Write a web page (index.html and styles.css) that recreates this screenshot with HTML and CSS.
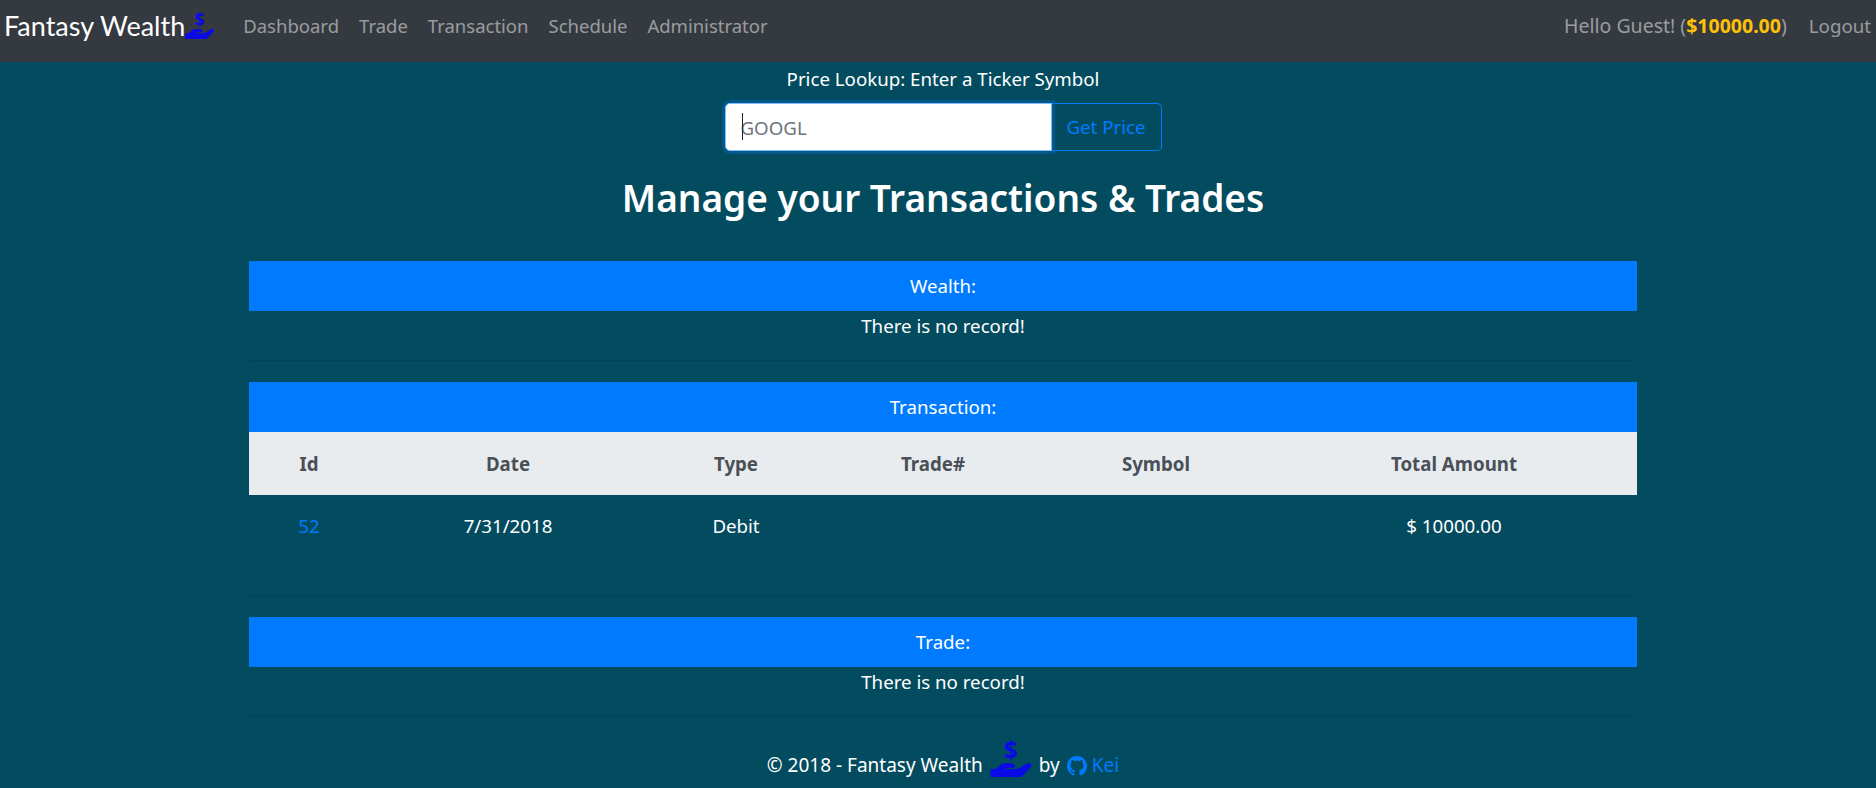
FILE: index.html
```html
<!DOCTYPE html>
<html>
<head>
    <title>Fantasy Wealth</title>
    <link rel="stylesheet" href="styles.css">
</head>
<body>
    <nav class="topbar">
        <a class="brand" href="#">Fantasy Wealth<span class="money-hand money-hand-small"><span class="money-sign">$</span><svg viewBox="0 0 41 15"><path d="M0 7h5l6-5c2-1 5-1 7-1l5 1c2 1 2 4-1 4h-6v1h11l9-5c2-2 5-1 5 2l-8 9c-2 2-4 3-6 3H0z"/></svg></span></a>
        <ul class="nav-links">
            <li><a href="#">Dashboard</a></li>
            <li><a href="#">Trade</a></li>
            <li><a href="#">Transaction</a></li>
            <li><a href="#">Schedule</a></li>
            <li><a href="#">Administrator</a></li>
        </ul>
        <div class="nav-user">
            <span>Hello Guest! (<b class="balance">$10000.00</b>)</span>
            <a href="#">Logout</a>
        </div>
    </nav>

    <main class="page-container">
        <div class="lookup">
            <label for="ticker">Price Lookup: Enter a Ticker Symbol</label>
            <div class="lookup-group">
                <div class="ticker-wrap">
                    <input type="text" id="ticker" placeholder="GOOGL">
                    <span class="caret"></span>
                </div>
                <button>Get Price</button>
            </div>
        </div>

        <h1>Manage your Transactions &amp; Trades</h1>

        <section class="panel">
            <h2>Wealth:</h2>
            <p>There is no record!</p>
        </section>

        <section class="panel panel-table">
            <h2>Transaction:</h2>
            <table>
                <colgroup>
                    <col class="col-id">
                    <col class="col-date">
                    <col class="col-type">
                    <col class="col-trade">
                    <col class="col-symbol">
                    <col>
                </colgroup>
                <thead>
                    <tr>
                        <th>Id</th>
                        <th>Date</th>
                        <th>Type</th>
                        <th>Trade#</th>
                        <th>Symbol</th>
                        <th>Total Amount</th>
                    </tr>
                </thead>
                <tbody>
                    <tr>
                        <td><a href="#">52</a></td>
                        <td>7/31/2018</td>
                        <td>Debit</td>
                        <td></td>
                        <td></td>
                        <td>$ 10000.00</td>
                    </tr>
                </tbody>
            </table>
        </section>

        <section class="panel">
            <h2>Trade:</h2>
            <p>There is no record!</p>
        </section>

        <footer>
            <span>© 2018 - Fantasy Wealth</span>
            <span class="money-hand"><span class="money-sign">$</span><svg viewBox="0 0 41 15"><path d="M0 7h5l6-5c2-1 5-1 7-1l5 1c2 1 2 4-1 4h-6v1h11l9-5c2-2 5-1 5 2l-8 9c-2 2-4 3-6 3H0z"/></svg></span>
            <span>by</span>
            <a href="#" class="author">
                <svg class="github-icon" viewBox="0 0 16 16"><path d="M8 0C3.580 0 0 3.580 0 8c0 3.540 2.290 6.530 5.470 7.590.4.070.55-.17.55-.38 0-.19-.01-.82-.01-1.490-2.010.37-2.530-.49-2.690-.94-.09-.23-.48-.94-.82-1.130-.28-.15-.68-.52-.01-.53.63-.01 1.080.58 1.230.82.72 1.210 1.870.87 2.330.66.07-.52.28-.87.51-1.070-1.780-.2-3.640-.89-3.640-3.950 0-.87.31-1.590.82-2.150-.08-.2-.36-1.020.08-2.120 0 0 .67-.21 2.200.82.64-.18 1.320-.27 2-.27.68 0 1.360.09 2 .27 1.530-1.040 2.200-.82 2.200-.82.44 1.100.16 1.920.08 2.120.51.56.82 1.270.82 2.150 0 3.070-1.870 3.750-3.650 3.950.29.25.54.73.54 1.480 0 1.070-.01 1.930-.01 2.200 0 .21.15.46.55.38A8.013 8.013 0 0016 8c0-4.420-3.580-8-8-8z"/></svg>
                Kei
            </a>
        </footer>
    </main>
</body>
</html>
```

FILE: styles.css
```css
html, body {
    height: 788px;
    overflow: hidden;
}
body {
    margin: 0;
    background-color: #034c60;
    color: #fff;
    font-family: "Noto Sans", sans-serif;
    font-size: 18.7px;
    line-height: 1.5;
}
a { text-decoration: none; color: #007bff; }

/* Hand holding a dollar sign, used in the brand and the footer */
.money-hand {
    display: inline-flex;
    flex-direction: column;
    align-items: center;
    width: 42px;
    height: 40px;
    color: #0a0ae6;
    fill: #0a0ae6;
}
.money-hand svg { width: 100%; height: 15px; flex: none; margin-top: auto; }
.money-sign {
    font-size: 25px;
    font-weight: 700;
    line-height: 25px;
}
.money-hand-small { width: 29px; height: 28px; }
.money-hand-small svg { height: 11px; }
.money-hand-small .money-sign { font-size: 18px; line-height: 17px; }

/* Top bar */
.topbar {
    display: flex;
    align-items: center;
    height: 62px;
    padding: 0 5px 10px 4px;
    box-sizing: border-box;
    background-color: #343a40;
    font-size: 18.5px;
}
.brand {
    display: flex;
    align-items: center;
    color: #fff;
    font-family: "Lato", sans-serif;
    font-size: 27px;
    line-height: 32px;
    margin-right: 29px;
}
.brand .money-hand { margin-top: -2px; font-family: "Noto Sans", sans-serif; }
.nav-links {
    display: flex;
    gap: 20px;
    list-style: none;
    margin: 0;
    padding: 0;
}
.nav-links a, .nav-user a, .nav-user span { color: rgba(255, 255, 255, .5); }
.nav-user {
    display: flex;
    align-items: baseline;
    gap: 22px;
    margin-left: auto;
    font-size: 19.5px;
}
.nav-user a { font-size: 18.7px; }
.balance { color: #ffc107; }

/* Lookup */
.page-container {
    width: 1388px;
    margin-left: 249px;
}
.lookup {
    display: flex;
    flex-direction: column;
    align-items: center;
    padding-top: 3px;
}
.lookup-group {
    display: flex;
    width: 437px;
    height: 48px;
    margin-top: 10px;
}
.ticker-wrap {
    position: relative;
    flex: 1;
    z-index: 1;
}
.ticker-wrap input {
    width: 100%;
    height: 100%;
    box-sizing: border-box;
    padding: 0 15px;
    border: 1px solid #80bdff;
    border-radius: 5px 0 0 5px;
    box-shadow: 0 0 0 3px rgba(0, 123, 255, .25);
    font: inherit;
    outline: none;
}
.ticker-wrap input::placeholder { color: #6c757d; }
.caret {
    position: absolute;
    left: 17px;
    top: 10px;
    width: 1px;
    height: 27px;
    background-color: #222;
}
.lookup-group button {
    width: 110px;
    border: 1px solid #007bff;
    border-left: 0;
    border-radius: 0 5px 5px 0;
    background: transparent;
    color: #007bff;
    font: inherit;
}

h1 {
    margin: 25px 0 41px;
    font-size: 37px;
    font-weight: 600;
    line-height: 44px;
    text-align: center;
}

/* Sections */
.panel {
    padding-bottom: 22px;
    margin-bottom: 21px;
    border-bottom: 1px solid rgba(0, 0, 0, .1);
    text-align: center;
}
.panel h2 {
    margin: 0;
    height: 50px;
    background-color: #007bff;
    font-size: 18.7px;
    font-weight: 400;
    line-height: 50px;
}
.panel p { margin: 0; height: 27px; line-height: 29px; }
.panel-table { padding-bottom: 37px; }

table {
    width: 100%;
    border-collapse: collapse;
    table-layout: fixed;
}
.col-id { width: 120px; }
.col-date { width: 278px; }
.col-type { width: 178px; }
.col-trade { width: 216px; }
.col-symbol { width: 230px; }
th {
    height: 63px;
    padding: 0;
    background-color: #e9ecef;
    color: #495057;
    font-weight: 700;
}
td { height: 61px; padding: 0 0 2px; }

footer {
    display: flex;
    justify-content: center;
    align-items: flex-end;
    gap: 7px;
    height: 40px;
    margin-top: -1px;
    font-size: 19px;
}
.author { display: inline-flex; align-items: center; gap: 5px; }
.github-icon { width: 20px; height: 20px; fill: #007bff; }
footer > span:not(.money-hand), .author { line-height: 27px; margin-bottom: -2px; }
```
